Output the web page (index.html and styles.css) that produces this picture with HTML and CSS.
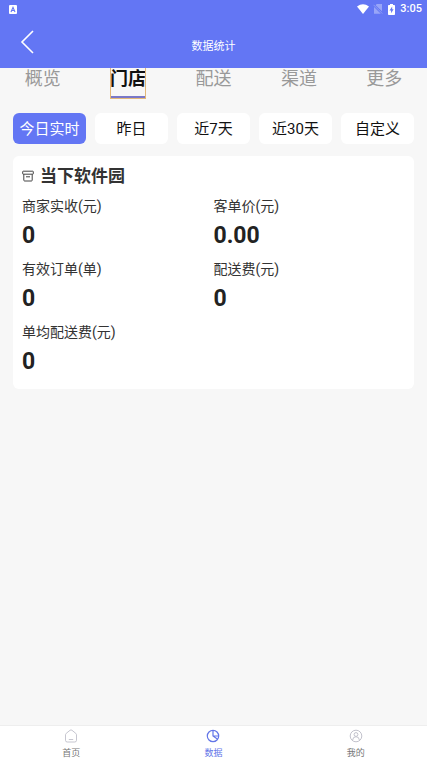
FILE: index.html
```html
<!DOCTYPE html>
<html lang="zh-CN">
<head>
<meta charset="utf-8">
<meta name="viewport" content="width=device-width, initial-scale=1">
<title>数据统计</title>
<link rel="stylesheet" href="styles.css">
</head>
<body>
<header class="header">
  <div class="status">
    <svg class="status-app" width="8" height="9" viewBox="0 0 8 9"><rect width="8" height="9" rx="1" fill="#fff"/><path d="M2 7 4 2.3 6 7M2.8 5.5h2.4" fill="none" stroke="#6376f4" stroke-width="1.1"/></svg>
    <svg width="12" height="10" viewBox="0 0 12 10"><path d="M0 2.6Q6-2.2 12 2.6L6 10z" fill="#fff"/></svg>
    <svg class="status-sim" width="10" height="10" viewBox="0 0 10 10"><path d="M3.800 0H9v7.200L2.600 1.200zM1 3 7.800 9.800H1z" fill="#98a5f8"/><path d="M.5.800 9.300 9.600" stroke="#98a5f8" stroke-width=".8"/></svg>
    <svg class="status-battery" width="7" height="11" viewBox="0 0 7 11"><path d="M2 0h3v1h1.2q.8 0 .8.8v8.4q0 .8-.8.8H.8Q0 11 0 10.200V1.800Q0 1 .8 1H2z" fill="#fff"/><path d="M4.200 2.500 1.500 6.400h1.600v2.800l2.500-4H4.200z" fill="#6376f4"/></svg>
    <time>3:05</time>
  </div>
  <div class="titlebar">
    <button class="back" type="button" aria-label="返回"><svg width="14" height="24" viewBox="0 0 14 24"><path d="M13 1 2 12l11 11" fill="none" stroke="#fff" stroke-width="1.600"/></svg></button>
    <h1>数据统计</h1>
  </div>
</header>
<main>
  <nav class="tabs">
    <a href="#overview">概览</a>
    <a href="#store" class="active" aria-current="page">门店</a>
    <a href="#delivery">配送</a>
    <a href="#channel">渠道</a>
    <a href="#more">更多</a>
  </nav>
  <div class="ranges">
    <button type="button" class="selected">今日实时</button>
    <button type="button">昨日</button>
    <button type="button">近7天</button>
    <button type="button">近30天</button>
    <button type="button">自定义</button>
  </div>
  <section class="card">
    <h2><svg width="12" height="12" viewBox="0 0 12 12" fill="none" stroke="#444" stroke-width="1"><rect x=".7" y="1.200" width="10.600" height="3" rx=".5"/><path d="M1.800 4.200v6q0 .8.8.8h6.800q.8 0 .8-.8v-6M4 6.800h4"/></svg>当下软件园</h2>
    <dl>
      <div><dt>商家实收(元)</dt><dd>0</dd></div>
      <div><dt>客单价(元)</dt><dd>0.00</dd></div>
      <div><dt>有效订单(单)</dt><dd>0</dd></div>
      <div><dt>配送费(元)</dt><dd>0</dd></div>
      <div><dt>单均配送费(元)</dt><dd>0</dd></div>
    </dl>
  </section>
</main>
<nav class="bottom">
  <a href="#home"><svg width="14" height="14" viewBox="0 0 14 14" fill="none" stroke="#c6c6d0"><path d="M1.500 5.800Q1.500 5 2.200 4.400L6 1.300q1-.8 2 0l3.800 3.100q.7.600.7 1.400v5.500q0 1.700-1.700 1.700H3.200q-1.700 0-1.700-1.700zM4.800 10.500h4.400"/></svg>首页</a>
  <a href="#data" class="active" aria-current="page"><svg width="14" height="14" viewBox="0 0 14 14" fill="none" stroke="#6376e8" stroke-width="1.200"><circle cx="7" cy="7" r="5.700"/><path d="M7 1.300V7l4.700 3.200M7 7h5.700"/></svg>数据</a>
  <a href="#mine"><svg width="14" height="14" viewBox="0 0 14 14" fill="none" stroke="#c2c2cc"><circle cx="7" cy="7" r="5.800"/><circle cx="7" cy="5.500" r="1.900"/><path d="M3.600 11Q4 7.700 7 7.700T10.400 11"/></svg>我的</a>
</nav>
</body>
</html>
```
FILE: styles.css
```css
* {
  box-sizing: border-box;
}

body {
  margin: 0;
  min-height: 100vh;
  display: flex;
  flex-direction: column;
  background: #f7f7f7;
  color: #222;
  font-family: Roboto, "Noto Sans CJK SC", sans-serif;
}

a {
  color: inherit;
  text-decoration: none;
}

button {
  padding: 0;
  border: 0;
  background: none;
  color: inherit;
  font: inherit;
}

svg {
  display: block;
  flex: none;
}

h1,
h2,
dl,
dd {
  margin: 0;
}

.header {
  position: relative;
  z-index: 1;
  background: #6376f4;
  color: #fff;
}

.status {
  display: flex;
  align-items: center;
  height: 18px;
  padding: 0 5px 0 9px;
  font-size: 11px;
  font-weight: 500;
  line-height: 18px;
}

.status-app {
  margin-right: auto;
}

.status-sim {
  margin-left: 4px;
}

.status-battery {
  margin: 0 5px 0 5px;
}

.titlebar {
  display: grid;
  grid-template-columns: 48px 1fr 48px;
  align-items: center;
  height: 50px;
}

.back {
  display: flex;
  align-items: center;
  height: 48px;
  padding: 0 0 2px 20px;
}

h1 {
  padding-top: 8px;
  font-size: 11px;
  line-height: 16px;
  font-weight: 400;
  text-align: center;
}

main {
  flex: 1;
}

.tabs {
  display: grid;
  grid-template-columns: repeat(5, 1fr);
  justify-items: center;
  margin-top: -4px;
  color: #999;
  font-size: 18px;
  line-height: 30px;
}

.tabs a {
  height: 35px;
}

.tabs .active {
  border-bottom: 3px solid #7a78c8;
  outline: 1px solid #e3b878;
  outline-offset: -1px;
  color: #111;
  font-weight: 700;
}

.ranges {
  display: grid;
  grid-template-columns: repeat(5, 1fr);
  gap: 9px;
  padding: 14px 13px 12px;
}

.ranges button {
  height: 31px;
  border-radius: 6px;
  background: #fff;
  color: #111;
  font-size: 15px;
  line-height: 30px;
  white-space: nowrap;
}

.ranges .selected {
  background: #6376f4;
  color: #fff;
}

.card {
  margin: 0 13px;
  padding: 8px 9px 4px;
  border-radius: 6px;
  background: #fff;
}

h2 {
  display: flex;
  align-items: center;
  gap: 6px;
  color: #333;
  font-size: 17px;
  line-height: 24px;
}

dl {
  display: grid;
  grid-template-columns: 1fr 1fr;
  padding-top: 8px;
}

dl div {
  height: 63px;
}

dt {
  color: #333;
  font-size: 14px;
  line-height: 20px;
}

dd {
  padding-top: 5px;
  font-size: 23px;
  font-weight: 700;
  line-height: 30px;
}

.bottom {
  display: grid;
  grid-template-columns: repeat(3, 1fr);
  height: 35px;
  border-top: 1px solid #eee;
  background: #fff;
  color: #777;
  font-size: 9px;
  line-height: 12px;
}

.bottom a {
  display: flex;
  flex-direction: column;
  align-items: center;
  gap: 4px;
  padding-top: 3px;
}

.bottom .active {
  color: #6376e8;
}
```
